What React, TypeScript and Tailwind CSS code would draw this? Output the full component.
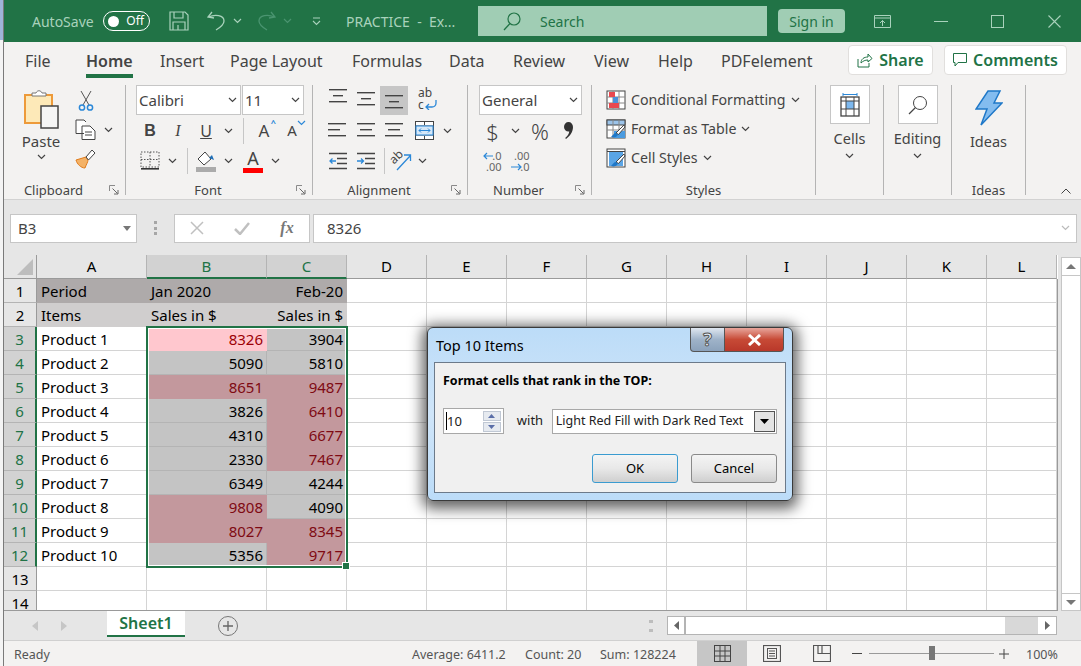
import type { ReactNode } from "react"

const green = "#217346"

function Chev({ className = "" }: { className?: string }) {
  return (
    <svg width="9" height="6" viewBox="0 0 9 6" className={className}>
      <path d="M1 1l3.5 3.5L8 1" fill="none" stroke="currentColor" strokeWidth="1.2" />
    </svg>
  )
}

function Slot({ className, children }: { className: string; children?: ReactNode }) {
  return <div className={`flex items-center justify-center shrink-0 ${className}`}>{children}</div>
}

function Launcher() {
  return (
    <svg width="10" height="10" viewBox="0 0 10 10" className="absolute right-[6px] top-[3px]">
      <path d="M.5 6V.5H6" fill="none" stroke="#8a8a8a" />
      <path d="M3.5 3.5l5 5M9 5v4H5" fill="none" stroke="#666" />
    </svg>
  )
}

function Group({
  label,
  launcher,
  className,
  labelClass = "",
  children,
}: {
  label?: string
  launcher?: boolean
  className: string
  labelClass?: string
  children: ReactNode
}) {
  return (
    <div className={`shrink-0 h-[110px] mt-[7px] border-r border-[#b4b4b4] ${className}`}>
      <div className="h-[97px]">{children}</div>
      <div className={`relative h-[16px] text-[13px] leading-[16px] text-center text-[#444] ${labelClass}`}>
        {label}
        {launcher && <Launcher />}
      </div>
    </div>
  )
}

function TitleBar() {
  const soft = "#a9d2bc"
  return (
    <div className="flex items-center h-[42px] bg-[#217346] pl-[28px] text-[14px] shrink-0" style={{ color: soft }}>
      <div className="w-[71px]">AutoSave</div>
      <div className="flex items-center justify-between w-[47px] h-[20px] rounded-full border border-white px-[4px]">
        <span className="w-[11px] h-[11px] rounded-full bg-white" />
        <span className="text-[12px] text-white pr-[1px]">Off</span>
      </div>
      <svg width="20" height="20" viewBox="0 0 20 20" className="ml-[19px]">
        <path d="M1 1h15l3 3v15H1zM5 1v6h9V1M4 19v-8h12v8M9 14v5" fill="none" stroke={soft} strokeWidth="1.2" />
      </svg>
      <svg width="19" height="20" viewBox="0 0 19 20" className="ml-[18px]">
        <path d="M5 1L1 6l6 1M1.5 6C8 3 17 4 17 10c0 3-3 6-8 9" fill="none" stroke={soft} strokeWidth="1.3" />
      </svg>
      <Chev className="ml-[7px]" />
      <svg width="19" height="20" viewBox="0 0 19 20" className="ml-[15px]">
        <path d="M14 1l4 5-6 1M17.5 6C11 3 2 4 2 10c0 3 3 6 8 9" fill="none" stroke="#4a9470" strokeWidth="1.3" />
      </svg>
      <Chev className="ml-[7px] text-[#4a9470]" />
      <svg width="9" height="9" viewBox="0 0 9 9" className="ml-[20px]">
        <path d="M1 1h7M1 4l3.5 3.5L8 4" fill="none" stroke={soft} strokeWidth="1.1" />
      </svg>
      <div className="w-[157px] pl-[25px] whitespace-nowrap">PRACTICE&nbsp;&nbsp;-&nbsp;&nbsp;Ex...</div>
      <div className="flex items-center w-[289px] h-[30px] bg-[#a0cdb4] pl-[24px] text-[#217346]">
        <svg width="20" height="20" viewBox="0 0 20 20">
          <circle cx="12" cy="8" r="6" fill="none" stroke={green} strokeWidth="1.2" />
          <path d="M8 12.5L2 19" stroke={green} strokeWidth="1.3" />
        </svg>
        <span className="ml-[18px]">Search</span>
      </div>
      <div className="ml-[11px] flex items-center justify-center w-[67px] h-[24px] rounded-sm bg-[#a0cdb4] text-[#217346]">Sign in</div>
      <svg width="17" height="13" viewBox="0 0 17 13" className="ml-[29px]">
        <path d="M.5.5h16v12H.5zM.5 3h16M8.5 11V5.5M6 8l2.5-2.5L11 8" fill="none" stroke={soft} />
      </svg>
      <div className="ml-[43px] w-[14px] h-px" style={{ backgroundColor: soft }} />
      <div className="ml-[43px] w-[13px] h-[13px] border" style={{ borderColor: soft }} />
      <svg width="13" height="13" viewBox="0 0 13 13" className="ml-[44px]">
        <path d="M.5.5l12 12M12.5.5l-12 12" stroke={soft} strokeWidth="1.1" />
      </svg>
    </div>
  )
}

function TabRow() {
  const tabs = [
    ["File", "w-[61px]"],
    ["Home", "w-[74px]"],
    ["Insert", "w-[70px]"],
    ["Page Layout", "w-[122px]"],
    ["Formulas", "w-[97px]"],
    ["Data", "w-[64px]"],
    ["Review", "w-[81px]"],
    ["View", "w-[64px]"],
    ["Help", "w-[63px]"],
    ["PDFelement", "w-[127px]"],
  ]
  return (
    <div className="flex items-center h-[36px] bg-[#f3f2f1] pl-[21px] text-[16px] text-[#444] shrink-0">
      {tabs.map(([name, w]) => (
        <div key={name} className={`relative shrink-0 pt-[1px] ${w} ${name === "Home" ? "font-semibold" : ""}`}>
          {name}
          {name === "Home" && <div className="absolute left-0 top-[26px] w-[47px] h-[4px] bg-[#217346]" />}
        </div>
      ))}
      <div className="flex items-center justify-center gap-[6px] w-[85px] h-[30px] bg-white border border-[#e1dfdd] rounded-sm font-semibold text-[#217346]">
        <svg width="16" height="16" viewBox="0 0 16 16">
          <path d="M1 7v8h11v-4M4 11c0-4 3-6 7-6V2l4 4.5L11 10V8c-3 0-5 1-7 3z" fill="none" stroke={green} />
        </svg>
        Share
      </div>
      <div className="ml-[11px] flex items-center justify-center gap-[6px] w-[123px] h-[30px] bg-white border border-[#e1dfdd] rounded-sm font-semibold text-[#217346]">
        <svg width="14" height="15" viewBox="0 0 14 15">
          <path d="M.5.5h13v9H5l-3 3.5V9.5H.5z" fill="none" stroke={green} />
        </svg>
        Comments
      </div>
    </div>
  )
}

function Lines({ widths, gap = 5 }: { widths: number[]; gap?: number }) {
  return (
    <svg width="20" height="20" viewBox="0 0 20 20">
      {widths.map((w, i) => (
        <rect key={i} x={gap === 0 ? 0 : 10 - w / 2} y={2 + i * 6} width={w} height="1.4" fill="#444" />
      ))}
    </svg>
  )
}

function Indent({ right }: { right?: boolean }) {
  return (
    <svg width="18" height="18" viewBox="0 0 18 18">
      <path d="M0 1.5h18M8 6.5h10M8 11.5h10M0 16.5h18" stroke="#444" strokeWidth="1.3" />
      {right ? (
        <path d="M0 9h6M4 6.5L6.5 9 4 11.5" fill="none" stroke="#2b88d8" strokeWidth="1.3" />
      ) : (
        <path d="M7 9H1M3.5 6.5L1 9l2.5 2.5" fill="none" stroke="#2b88d8" strokeWidth="1.3" />
      )}
    </svg>
  )
}

function StyleIcon({ kind }: { kind: "cond" | "table" | "cell" }) {
  return (
    <svg width="20" height="20" viewBox="0 0 20 20">
      {kind === "cond" && (
        <g>
          <rect x="1" y="1" width="18" height="18" fill="#fff" stroke="#444" />
          <path d="M1 7h18M1 13h18M7 1v18M13 1v18" stroke="#888" />
          <rect x="3" y="2" width="6" height="5" fill="#e8484f" />
          <rect x="7" y="7" width="5" height="6" fill="#4a90d9" />
          <rect x="3" y="13" width="10" height="5" fill="#e8484f" />
        </g>
      )}
      {kind !== "cond" && kind === "table" && (
        <g>
          <rect x="1" y="1" width="18" height="18" fill="#fff" stroke="#444" />
          <rect x="1" y="1" width="18" height="5" fill="#9cc4ea" stroke="#444" />
          <path d="M1 11h18M7 1v18M13 1v18" stroke="#888" />
          <rect x="8" y="12" width="11" height="7" fill="#4a9be0" />
        </g>
      )}
      {kind === "cell" && (
        <g>
          <rect x="1" y="1" width="18" height="18" fill="#fff" stroke="#444" />
          <rect x="3" y="3" width="14" height="15" fill="#5aa5e6" />
          <path d="M1 3.5h18" stroke="#444" />
        </g>
      )}
      {kind !== "cond" && (
        <g>
          <path d="M18 6l-8 8 2.5 1.5L19 8z" fill="#fff" stroke="#444" />
          <path d="M10 14c-2 0-3 2-5 4 3 1 6 0 7-2.5z" fill="#1f78c8" />
        </g>
      )}
    </svg>
  )
}

function Ribbon() {
  return (
    <div className="flex h-[122px] bg-[#f3f2f1] border-b border-[#d2d2d2] text-[#444] shrink-0">
      <Group label="Clipboard" launcher className="w-[122px] flex-none" labelClass="pr-[22px]">
        <div className="flex">
          <div className="ml-[16px] w-[42px] flex flex-col items-center">
            <svg width="35" height="39" viewBox="0 0 35 39" className="mt-[5px]">
              <path d="M1 5h27v28H1z" fill="#fde9b8" stroke="#ed9a3a" strokeWidth="2" />
              <path d="M8 6V3h4c1-3 5-3 6 0h4v3z" fill="#fff" stroke="#777" />
              <rect x="17" y="16" width="17" height="22" fill="#f5f5f5" stroke="#444" strokeWidth="1.5" />
            </svg>
            <span className="mt-[2px] text-[15px] leading-[20px]">Paste</span>
            <Chev className="mt-[3px]" />
          </div>
          <div className="ml-[13px] flex flex-col items-start pt-[5px]">
            <svg width="16" height="21" viewBox="0 0 16 21" className="ml-[3px]">
              <path d="M3 1l8 14M13 1L5 15" stroke="#555" />
              <circle cx="4" cy="17.5" r="2.6" fill="none" stroke="#2b88d8" strokeWidth="1.5" />
              <circle cx="12" cy="17.5" r="2.6" fill="none" stroke="#2b88d8" strokeWidth="1.5" />
            </svg>
            <div className="flex items-center mt-[8px]">
              <svg width="21" height="21" viewBox="0 0 21 21">
                <path d="M9 14.5H1V1h8l2 2M7 7h8l5 5v8.5H7z" fill="#fff" stroke="#444" />
                <path d="M10 13h7M10 16h7" stroke="#444" />
              </svg>
              <Chev className="ml-[8px]" />
            </div>
            <svg width="21" height="20" viewBox="0 0 21 20" className="mt-[9px]">
              <path d="M11 8L1 11c1 4 5 8 9 8 1-3 3-6 3-8z" fill="#f4b266" stroke="#e07b1a" />
              <path d="M11 8l2.500 3L20 4l-3-3z" fill="#fff" stroke="#444" />
            </svg>
          </div>
        </div>
      </Group>

      <Group label="Font" launcher className="w-[187px]" labelClass="pr-[22px]">
        <div className="pl-[10px]">
          <div className="flex gap-px h-[30px]">
            <div className="flex items-center justify-between w-[105px] bg-white border border-[#c6c6c6] pl-[2px] pr-[3px] text-[15px]">
              Calibri <Chev />
            </div>
            <div className="flex items-center justify-between w-[62px] bg-white border border-[#c6c6c6] pl-[2px] pr-[3px] text-[15px]">
              11 <Chev />
            </div>
          </div>
          <div className="flex items-center h-[31px] text-[16px]">
            <Slot className="w-[28px] font-bold font-['Liberation_Sans',sans-serif]">B</Slot>
            <Slot className="w-[28px] italic font-['Liberation_Serif',serif]">I</Slot>
            <Slot className="w-[28px] underline">U</Slot>
            <Slot className="w-[16px]"><Chev /></Slot>
            <div className="ml-[7px] w-px h-[26px] bg-[#c6c6c6]" />
            <Slot className="ml-[6px] w-[28px] relative text-[17px]">
              A<span className="absolute right-[2px] top-[-2px] text-[9px] font-bold text-[#2b88d8]">^</span>
            </Slot>
            <Slot className="w-[28px] relative text-[15px]">
              A<Chev className="absolute right-0 top-[1px] text-[#2b88d8]" />
            </Slot>
          </div>
          <div className="flex items-center h-[30px]">
            <Slot className="w-[28px]">
              <svg width="20" height="20" viewBox="0 0 20 20">
                <path d="M1 1h18v15H1zM10 1v15M1 8.500h18" fill="none" stroke="#555" strokeDasharray="1.500 1.500" />
                <rect x="1" y="17" width="18" height="1.600" fill="#333" />
              </svg>
            </Slot>
            <Slot className="w-[16px]"><Chev /></Slot>
            <div className="ml-[7px] w-px h-[26px] bg-[#c6c6c6]" />
            <Slot className="ml-[4px] w-[28px]">
              <svg width="20" height="21" viewBox="0 0 20 21">
                <path d="M9 1L2 8l6 6 7-6z" fill="#fff" stroke="#444" />
                <path d="M13 7l3-3 2 5z" fill="#1f6fb8" />
                <rect y="16" width="20" height="5" fill="#ababab" />
              </svg>
            </Slot>
            <Slot className="w-[16px]"><Chev /></Slot>
            <Slot className="ml-[3px] w-[28px] relative h-[26px]">
              <span className="text-[18px] leading-[20px] mb-[6px]">A</span>
              <div className="absolute left-[4px] bottom-[1px] w-[20px] h-[5px] bg-[#ff0000]" />
            </Slot>
            <Slot className="w-[17px]"><Chev /></Slot>
          </div>
        </div>
      </Group>

      <Group label="Alignment" launcher className="w-[155px]" labelClass="pr-[22px]">
        <div className="pl-[11px]">
          <div className="flex items-center h-[30px]">
            <Slot className="w-[28px] h-[29px]"><div className="-mt-[6px]"><Lines widths={[18, 10, 18]} /></div></Slot>
            <Slot className="w-[28px] h-[29px]"><Lines widths={[18, 10, 18]} /></Slot>
            <Slot className="w-[28px] h-[29px] bg-[#c6c6c6]"><div className="mt-[6px]"><Lines widths={[18, 10, 18]} /></div></Slot>
            <Slot className="w-[38px]">
              <div className="relative w-[18px] h-[26px] text-[12px] leading-[12px]">
                ab
                <br />c
                <svg width="12" height="10" viewBox="0 0 12 10" className="absolute left-[7px] top-[13px]">
                  <path d="M11 0v3c0 3-2 4-4 4H1M4 4L1 7l3 3" fill="none" stroke="#2b88d8" strokeWidth="1.300" />
                </svg>
              </div>
            </Slot>
          </div>
          <div className="flex items-center h-[31px]">
            <Slot className="w-[28px]"><Lines widths={[18, 12, 18]} gap={0} /></Slot>
            <Slot className="w-[28px]"><Lines widths={[18, 12, 18]} /></Slot>
            <Slot className="w-[28px]"><Lines widths={[18, 12, 18]} /></Slot>
            <Slot className="w-[33px]">
              <svg width="19" height="19" viewBox="0 0 19 19">
                <rect x=".5" y=".5" width="18" height="18" fill="#fff" stroke="#444" />
                <path d="M9.500 1v3M9.500 15v3M1 5h17M1 14h17" stroke="#444" />
                <rect x="1" y="5" width="17" height="9" fill="#d6e8f8" stroke="#2b88d8" />
                <path d="M4 9.500h11M6 7.500l-2 2 2 2M13 7.500l2 2-2 2" fill="none" stroke="#2b88d8" />
              </svg>
            </Slot>
            <Slot className="w-[12px]"><Chev /></Slot>
          </div>
          <div className="flex items-center h-[30px]">
            <Slot className="w-[28px]"><Indent /></Slot>
            <Slot className="w-[28px]"><Indent right /></Slot>
            <div className="ml-[4px] w-px h-[26px] bg-[#c6c6c6]" />
            <Slot className="w-[32px]">
              <div className="relative w-[22px] h-[22px]">
                <span className="absolute left-[-1px] top-[1px] text-[12px] leading-[12px] rotate-[-45deg]">ab</span>
                <svg width="22" height="22" viewBox="0 0 22 22" className="absolute left-0 top-0">
                  <path d="M7 20L20 6M14 5h6.500v6" fill="none" stroke="#2b88d8" strokeWidth="1.300" />
                </svg>
              </div>
            </Slot>
            <Slot className="w-[11px]"><Chev /></Slot>
          </div>
        </div>
      </Group>

      <Group label="Number" launcher className="w-[124px]" labelClass="pr-[22px]">
        <div className="pl-[11px]">
          <div className="flex items-center justify-between w-[103px] h-[30px] bg-white border border-[#c6c6c6] pl-[2px] pr-[3px] text-[15px]">
            General <Chev />
          </div>
          <div className="flex items-center h-[31px]">
            <Slot className="w-[27px] text-[22px] font-light leading-[26px]">$</Slot>
            <Slot className="w-[18px]"><Chev /></Slot>
            <Slot className="w-[32px] text-[22px] font-light leading-[26px]">%</Slot>
            <Slot className="w-[25px]">
              <svg width="9" height="17" viewBox="0 0 9 17">
                <path d="M4.500 0C7 0 9 2 9 5c0 5-3 9-7 12l-.8-1C3.500 14 5 12 5.300 9.500 2.500 10 0 8 0 5c0-3 2-5 4.500-5z" fill="#333" />
              </svg>
            </Slot>
          </div>
          <div className="flex items-center h-[30px] text-[11px] leading-[10px] text-[#666]">
            <Slot className="w-[26px]">
              <div className="relative w-[19px] h-[21px] text-right">
                <span className="absolute right-0 top-0">.0</span>
                <span className="absolute right-0 bottom-0">.00</span>
                <svg width="10" height="8" viewBox="0 0 10 8" className="absolute left-0 top-[1px]">
                  <path d="M10 4H1M4 1L1 4l3 3" fill="none" stroke="#2b88d8" strokeWidth="1.200" />
                </svg>
              </div>
            </Slot>
            <Slot className="w-[30px]">
              <div className="relative w-[19px] h-[21px] text-right">
                <span className="absolute right-0 top-0">.00</span>
                <span className="absolute right-0 bottom-0">.0</span>
                <svg width="11" height="8" viewBox="0 0 11 8" className="absolute left-0 bottom-[1px]">
                  <path d="M0 4h10M7 1l3 3-3 3" fill="none" stroke="#2b88d8" strokeWidth="1.200" />
                </svg>
              </div>
            </Slot>
          </div>
        </div>
      </Group>

      <Group label="Styles" className="w-[224px]">
        <div className="pl-[14px] flex flex-col text-[14.200px]">
          <div className="flex items-center h-[29px]">
            <StyleIcon kind="cond" />
            <span className="ml-[5px]">Conditional Formatting</span>
            <Chev className="ml-[5px]" />
          </div>
          <div className="flex items-center h-[29px]">
            <StyleIcon kind="table" />
            <span className="ml-[5px]">Format as Table</span>
            <Chev className="ml-[5px]" />
          </div>
          <div className="flex items-center h-[29px]">
            <StyleIcon kind="cell" />
            <span className="ml-[5px]">Cell Styles</span>
            <Chev className="ml-[5px]" />
          </div>
        </div>
      </Group>

      <Group className="w-[68px]">
        <div className="flex flex-col items-center text-[14.500px]">
          <div className="flex items-center justify-center w-[40px] h-[39px] bg-white border border-[#c6c6c6]">
            <svg width="20" height="24" viewBox="0 0 20 24">
              <path d="M3 1.500h14M3 0v3M17 0v3" stroke="#2b88d8" />
              <rect x="1" y="4" width="18" height="19" fill="#fff" stroke="#444" strokeWidth="1.300" />
              <rect x="6" y="8" width="8" height="8" fill="#7db8ee" />
              <path d="M1 8h18M1 16h18M6 4v19M14 4v19" stroke="#444" />
            </svg>
          </div>
          <span className="mt-[4px] leading-[20px]">Cells</span>
          <Chev className="mt-[5px]" />
        </div>
      </Group>

      <Group className="w-[68px]">
        <div className="flex flex-col items-center text-[14.500px]">
          <div className="flex items-center justify-center w-[40px] h-[39px] bg-white border border-[#c6c6c6]">
            <svg width="20" height="20" viewBox="0 0 20 20">
              <circle cx="12" cy="8" r="6.500" fill="none" stroke="#444" />
              <path d="M7.500 12.500L1 19" stroke="#444" strokeWidth="1.300" />
            </svg>
          </div>
          <span className="mt-[4px] leading-[20px]">Editing</span>
          <Chev className="mt-[5px]" />
        </div>
      </Group>

      <Group label="Ideas" className="w-[74px]">
        <div className="flex flex-col items-center text-[14.500px]">
          <svg width="28" height="36" viewBox="0 0 28 36" className="mt-[5px]">
            <path d="M13 1h12l-6 12h8L6 35l6-16H1z" fill="#83bcef" stroke="#1f78c8" strokeWidth="1.500" />
          </svg>
          <span className="mt-[5px] leading-[20px]">Ideas</span>
        </div>
      </Group>

      <div className="flex-1 flex justify-end items-end pr-[10px] pb-[5px]">
        <svg width="10" height="6" viewBox="0 0 10 6">
          <path d="M.5 5.500L5 1l4.500 4.500" fill="none" stroke="#444" />
        </svg>
      </div>
    </div>
  )
}

function FormulaBar() {
  return (
    <div className="flex items-center h-[55px] bg-[#e6e6e6] pl-[6px] pr-[4px] pt-[1px] shrink-0 text-[15px] text-[#444]">
      <div className="flex items-center justify-between w-[127px] h-[29px] bg-white border border-[#c6c6c6] pl-[7px] pr-[5px]">
        B3
        <svg width="8" height="5" viewBox="0 0 8 5"><path d="M0 0h8L4 5z" fill="#777" /></svg>
      </div>
      <div className="ml-[17px] w-[3px] h-[14px] border-y-[3px] border-[#a6a6a6] bg-[linear-gradient(#a6a6a6,#a6a6a6)] bg-[length:3px_3px] bg-center bg-no-repeat" />
      <div className="ml-[17px] flex items-center w-[136px] h-[29px] bg-white border border-[#c6c6c6]">
        <Slot className="w-[44px]">
          <svg width="14" height="14" viewBox="0 0 14 14"><path d="M1 1l12 12M13 1L1 13" stroke="#c0c0c0" strokeWidth="1.500" /></svg>
        </Slot>
        <Slot className="w-[46px]">
          <svg width="16" height="13" viewBox="0 0 16 13"><path d="M1 7l5 5L15 1" fill="none" stroke="#c0c0c0" strokeWidth="2.500" /></svg>
        </Slot>
        <Slot className="w-[44px] italic font-bold text-[16px] text-[#777] font-['Liberation_Serif',serif]">fx</Slot>
      </div>
      <div className="ml-[3px] flex-1 flex items-center justify-between h-[29px] bg-white border border-[#c6c6c6] pl-[13px] pr-[6px]">
        8326
        <Chev className="text-[#bbb]" />
      </div>
    </div>
  )
}

const colNames = ["A", "B", "C", "D", "E", "F", "G", "H", "I", "J", "K", "L"]
const products: [string, number, number][] = [
  ["Product 1", 8326, 3904],
  ["Product 2", 5090, 5810],
  ["Product 3", 8651, 9487],
  ["Product 4", 3826, 6410],
  ["Product 5", 4310, 6677],
  ["Product 6", 2330, 7467],
  ["Product 7", 6349, 4244],
  ["Product 8", 9808, 4090],
  ["Product 9", 8027, 8345],
  ["Product 10", 5356, 9717],
]
const hot = new Set([8651, 9487, 6410, 6677, 7467, 9808, 8027, 8345, 9717])

function numCell(v: number) {
  let tone = "bg-[#c4c4c4] text-black border-[#b4b4b4]"
  if (v === 8326) tone = "bg-[#ffc7ce] text-[#9c0006] border-[#ffc7ce]"
  else if (hot.has(v)) tone = "bg-[#c3989d] text-[#7f0a13] border-[#c3989d]"
  return (
    <div key={v} className={`h-[24px] border-b border-r text-right pr-[3px] leading-[24px] ${tone}`}>
      {v}
    </div>
  )
}

function Cell({ tone = "border-[#d4d4d4]", children }: { tone?: string; children?: ReactNode }) {
  return (
    <div className={`h-[24px] border-b border-r pl-[4px] pr-[3px] leading-[24px] whitespace-nowrap overflow-hidden ${tone}`}>
      {children}
    </div>
  )
}

function RowHead({ n, active }: { n: number; active?: boolean }) {
  return (
    <div
      className={`h-[24px] text-center leading-[24px] border-b border-[#b4b4b4] ${
        active
          ? "bg-[#d2d2d2] text-[#217346] border-r-2 border-r-[#217346]"
          : "bg-[#e6e6e6] text-black border-r border-r-[#9a9a9a]"
      }`}
    >
      {n}
    </div>
  )
}

function Blanks({ count = 9 }: { count?: number }) {
  return (
    <>
      {Array.from({ length: count }).map((_, i) => (
        <Cell key={i} />
      ))}
    </>
  )
}

function Sheet() {
  const dark = "bg-[#aeaaaa] border-[#aeaaaa]"
  const light = "bg-[#d0cece] border-[#d0cece]"
  return (
    <div className="flex h-[356px] bg-[#e6e6e6] shrink-0">
      <div className="relative w-[1054px] h-[356px] overflow-hidden">
        <div className="grid grid-cols-[33px_110px_120px_80px_repeat(8,80px)_70px] bg-white text-[15px] text-black">
          <div className="h-[24px] bg-[#e6e6e6] border-b border-[#9a9a9a] border-r flex items-end justify-end pr-[3px] pb-[3px]">
            <svg width="16" height="16" viewBox="0 0 16 16"><path d="M16 0v16H0z" fill="#bdbdbd" /></svg>
          </div>
          {colNames.map((c) => {
            const on = c === "B" || c === "C"
            return (
              <div
                key={c}
                className={`h-[24px] text-center leading-[23px] border-r border-[#b4b4b4] ${
                  on ? "bg-[#d2d2d2] text-[#217346] border-b-2 border-b-[#217346]" : "bg-[#e6e6e6] border-b border-b-[#9a9a9a]"
                }`}
              >
                {c}
              </div>
            )
          })}

          <RowHead n={1} />
          <Cell tone={dark}>Period</Cell>
          <Cell tone={dark}>Jan 2020</Cell>
          <Cell tone={`${dark} text-right`}>Feb-20</Cell>
          <Blanks />

          <RowHead n={2} />
          <Cell tone={light}>Items</Cell>
          <Cell tone={light}>Sales in $</Cell>
          <Cell tone={`${light} text-right`}>Sales in $</Cell>
          <Blanks />

          {products.map(([name, jan, feb], i) => (
            <div key={name} className="contents">
              <RowHead n={i + 3} active />
              <Cell>{name}</Cell>
              {numCell(jan)}
              {numCell(feb)}
              <Blanks />
            </div>
          ))}

          {[13, 14].map((n) => (
            <div key={n} className="contents">
              <RowHead n={n} />
              <Blanks count={12} />
            </div>
          ))}
        </div>

        <div className="absolute left-[142px] top-[71px] w-[202px] h-[242px] border-2 border-[#217346]">
          <div className="w-full h-full border border-white" />
          <div className="absolute right-[-4px] bottom-[-4px] w-[6px] h-[6px] bg-[#217346] border border-white box-content" />
        </div>
        <div className="absolute right-0 top-[24px] w-px h-[332px] bg-[#9a9a9a]" />
        <div className="absolute left-0 bottom-0 w-full h-px bg-[#9a9a9a]" />
      </div>

      <div className="ml-[3px] w-[20px] flex flex-col pt-[2px]">
        <div className="flex items-center justify-center h-[19px] bg-white border border-[#c6c6c6]">
          <svg width="10" height="5" viewBox="0 0 10 5"><path d="M5 0l5 5H0z" fill="#777" /></svg>
        </div>
        <div className="flex-1 bg-white border-x border-[#c6c6c6]" />
        <div className="flex items-center justify-center h-[18px] bg-white border border-[#c6c6c6]">
          <svg width="10" height="5" viewBox="0 0 10 5"><path d="M0 0h10L5 5z" fill="#777" /></svg>
        </div>
      </div>
    </div>
  )
}

function SheetTabs() {
  return (
    <div className="flex items-start h-[30px] bg-[#e6e6e6] border-b border-[#d0d0d0] shrink-0">
      <svg width="6" height="10" viewBox="0 0 6 10" className="ml-[28px] mt-[10px]"><path d="M6 0v10L0 5z" fill="#c6c6c6" /></svg>
      <svg width="6" height="10" viewBox="0 0 6 10" className="ml-[23px] mt-[10px]"><path d="M0 0v10l6-5z" fill="#c6c6c6" /></svg>
      <div className="ml-[40px] flex items-center justify-center w-[78px] h-[26px] bg-white border-b-2 border-[#217346] text-[16px] font-semibold text-[#217346]">
        Sheet1
      </div>
      <div className="ml-[33px] mt-[5px] flex items-center justify-center w-[20px] h-[20px] rounded-full border border-[#777]">
        <svg width="10" height="10" viewBox="0 0 10 10"><path d="M5 0v10M0 5h10" stroke="#666" strokeWidth="1.300" /></svg>
      </div>
      <div className="ml-[411px] mt-[9px] w-[4px] h-[12px] border-y-[3px] border-[#bdbdbd]" />
      <div className="ml-[14px] mt-[5px] flex w-[390px] h-[19px] border border-[#b4b4b4] bg-[#d8d8d8]">
        <Slot className="w-[18px] bg-white border-r-2 border-[#b4b4b4]">
          <svg width="5" height="9" viewBox="0 0 5 9"><path d="M5 0v9L0 4.500z" fill="#666" /></svg>
        </Slot>
        <div className="w-[319px] bg-white" />
        <div className="flex-1" />
        <Slot className="w-[18px] bg-white">
          <svg width="5" height="9" viewBox="0 0 5 9"><path d="M0 0v9l5-4.500z" fill="#666" /></svg>
        </Slot>
      </div>
    </div>
  )
}

function StatusBar() {
  return (
    <div className="flex items-center flex-1 bg-[#f3f2f1] pl-[10px] text-[12.500px] text-[#555]">
      <span className="w-[398px] pt-[3px]">Ready</span>
      <span className="w-[113px] pt-[3px]">Average: 6411.2</span>
      <span className="w-[75px] pt-[3px]">Count: 20</span>
      <span className="w-[97px] pt-[3px]">Sum: 128224</span>
      <Slot className="w-[50px] h-full bg-[#c6c6c6]">
        <svg width="17" height="17" viewBox="0 0 17 17">
          <rect x=".5" y=".5" width="16" height="16" fill="none" stroke="#444" />
          <path d="M6 0v17M11 0v17M0 6h17M0 11h17" stroke="#444" />
        </svg>
      </Slot>
      <Slot className="w-[50px]">
        <svg width="18" height="17" viewBox="0 0 18 17">
          <rect x=".5" y=".5" width="17" height="16" fill="none" stroke="#555" strokeWidth="1.200" />
          <rect x="4.500" y="3.500" width="9" height="10" fill="none" stroke="#555" />
          <path d="M6 6h6M6 8.500h6M6 11h6" stroke="#555" />
        </svg>
      </Slot>
      <Slot className="w-[50px]">
        <svg width="18" height="17" viewBox="0 0 18 17">
          <path d="M.5.5h17v16H.5zM5 .5v8h4v-8M9 8.500h8.500" fill="none" stroke="#555" strokeWidth="1.200" />
        </svg>
      </Slot>
      <div className="ml-[5px] w-[10px] h-px bg-[#444]" />
      <div className="ml-[7px] relative w-[125px] h-px bg-[#9a9a9a]">
        <div className="absolute left-[60px] top-[-7px] w-[6px] h-[14px] bg-[#777]" />
      </div>
      <svg width="10" height="10" viewBox="0 0 10 10" className="ml-[5px]"><path d="M5 0v10M0 5h10" stroke="#444" /></svg>
      <span className="ml-[17px] pt-[3px]">100%</span>
    </div>
  )
}

function Dialog() {
  return (
    <div className="absolute left-[427px] top-[327px] w-[366px] h-[174px] rounded-[6px] border border-[#3a3a3a] bg-[linear-gradient(#bcdcf8,#cfe5f9_50%,#bcdcf8)] px-[6px] pb-[7px] shadow-[0_3px_14px_5px_rgba(0,0,0,0.6)] flex flex-col">
      <div className="flex h-[34px] shrink-0">
        <span className="pl-[2px] pt-[7px] text-[14.500px] leading-[20px] text-black">Top 10 Items</span>
        <div className="ml-auto mr-[2px] flex h-[24px]">
          <div className="flex items-center justify-center w-[35px] bg-[linear-gradient(#dfe7f0,#9fb3c9_50%,#8ba2bb)] border border-[#555] border-t-0 rounded-bl-[4px] text-[18px] font-bold text-[#e8eef5] [-webkit-text-stroke:1px_#555]">
            ?
          </div>
          <div className="flex items-center justify-center w-[59px] bg-[linear-gradient(#e8a69c,#c74a36_50%,#b9382a)] border border-[#555] border-l-0 border-t-0 rounded-br-[4px]">
            <svg width="15" height="12" viewBox="0 0 15 12">
              <path d="M2 1l11 10M13 1L2 11" stroke="#fff" strokeWidth="3" />
            </svg>
          </div>
        </div>
      </div>
      <div className="flex-1 bg-[#f0f0f0] border border-[#6c7a8a] px-[8px]">
        <div className="pt-[9px] text-[12.500px] font-bold leading-[18px] text-black">Format cells that rank in the TOP:</div>
        <div className="flex items-center mt-[18px] text-[13px] text-[#222]">
          <div className="flex items-center justify-between w-[61px] h-[26px] bg-white border border-[#a8a8a8] pl-[2px]">
            <span className="border-l border-black leading-[18px]">10</span>
            <div className="flex flex-col gap-px mr-[2px]">
              <div className="flex items-center justify-center w-[18px] h-[10px] bg-[#e6eaf0] border border-[#c0c8d4]">
                <svg width="7" height="4" viewBox="0 0 7 4"><path d="M3.500 0L7 4H0z" fill="#5a6ea8" /></svg>
              </div>
              <div className="flex items-center justify-center w-[18px] h-[10px] bg-[#e6eaf0] border border-[#c0c8d4]">
                <svg width="7" height="4" viewBox="0 0 7 4"><path d="M0 0h7L3.500 4z" fill="#5a6ea8" /></svg>
              </div>
            </div>
          </div>
          <span className="ml-[13px] w-[35px]">with</span>
          <div className="flex items-center justify-between w-[226px] h-[25px] bg-white border border-[#a8a8a8] pl-[3px] pr-px text-[12.500px]">
            Light Red Fill with Dark Red Text
            <div className="flex items-center justify-center w-[21px] h-[21px] bg-[#e4e4e4] border border-[#555]">
              <svg width="9" height="5" viewBox="0 0 9 5"><path d="M0 0h9L4.500 5z" fill="#000" /></svg>
            </div>
          </div>
        </div>
        <div className="flex justify-end gap-[13px] mt-[20px] text-[13px] text-black">
          <div className="flex items-center justify-center w-[86px] h-[29px] rounded-[3px] border border-[#3a9bd0] bg-[linear-gradient(#f4f4f4,#e8e8e8_50%,#cfcfcf)]">OK</div>
          <div className="flex items-center justify-center w-[86px] h-[29px] rounded-[3px] border border-[#8a8a8a] bg-[linear-gradient(#f4f4f4,#e8e8e8_50%,#cfcfcf)]">Cancel</div>
        </div>
      </div>
    </div>
  )
}

export default function App() {
  return (
    <div className="relative flex w-[1081px] h-[666px] overflow-hidden bg-white font-['Noto_Sans',sans-serif]">
      <div className="w-[3px] shrink-0 flex flex-col">
        <div className="h-[40px] bg-[#9fb4d8]" />
        <div className="flex-1 bg-[#f4f4f4]" />
      </div>
      <div className="flex-1 flex flex-col border-l border-[#7a7a7a] min-w-0">
        <TitleBar />
        <TabRow />
        <Ribbon />
        <FormulaBar />
        <Sheet />
        <SheetTabs />
        <StatusBar />
      </div>
      <Dialog />
    </div>
  )
}
